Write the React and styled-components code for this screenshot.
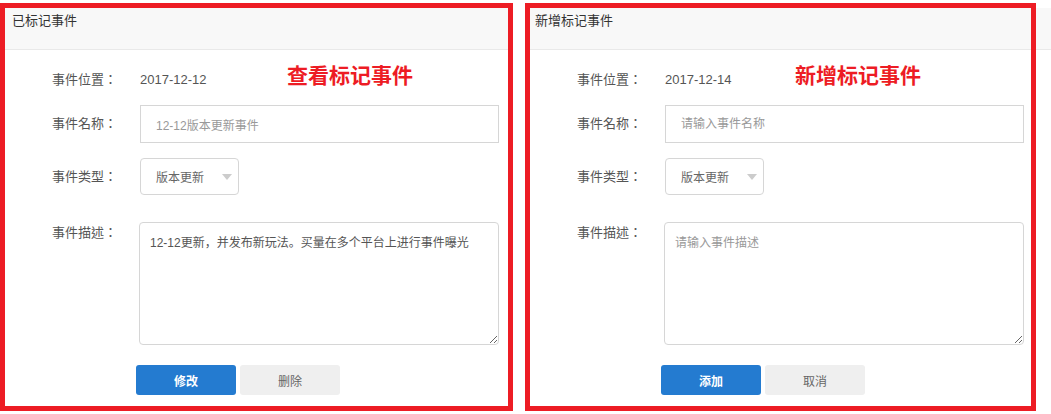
import React from "react";
import styled, { createGlobalStyle } from "styled-components";

const GlobalStyle = createGlobalStyle`
	html, body {
		margin: 0;
		padding: 0;
		background: #fff;
		font-family: "Liberation Sans", "Noto Sans CJK SC", sans-serif;
	}
	* {
		box-sizing: border-box;
	}
`;

const Page = styled.div`
	display: flex;
	gap: 12px;
	padding-top: 3px;
	width: 1051px;
	height: 414px;
`;

const Panel = styled.div`
	position: relative;
	width: ${(props) => props.width}px;
	height: 408px;
	border: 5px solid #ed1c24;
	background: #fff;
	display: flex;
	flex-direction: column;
`;

const Header = styled.div`
	height: 42px;
	background: #f8f8f8;
	border-bottom: 1px solid #e9e9e9;
	padding: 3px 0 0 ${(props) => props.indent}px;
	font-size: 13px;
	line-height: 20px;
	color: #333;
`;

// page header that continues past the right panel
const HeaderTail = styled.div`
	flex: 1;
	margin: 5px 0 0 -12px;
	height: 42px;
	background: #f8f8f8;
	border-bottom: 1px solid #e9e9e9;
`;

const Note = styled.div`
	position: absolute;
	top: 54px;
	left: ${(props) => props.left}px;
	font-family: "Noto Sans CJK SC", sans-serif;
	font-weight: 700;
	font-size: 21px;
	line-height: 24px;
	color: #ed1c24;
`;

const Body = styled.div`
	display: flex;
	flex-direction: column;
	padding: 20px 0 0 47px;
`;

const Row = styled.div`
	display: flex;
	align-items: ${(props) => (props.top ? "flex-start" : "center")};
	margin-top: ${(props) => props.gap || 0}px;
`;

const Label = styled.div`
	width: 88px;
	flex: none;
	font-family: "Liberation Sans", "Noto Sans CJK TC", sans-serif;
	font-size: 13px;
	line-height: 20px;
	color: #555;
	padding-top: ${(props) => (props.top ? 1 : 0)}px;
`;

const Value = styled.div`
	font-size: 13px;
	line-height: 20px;
	color: #555;
`;

const Input = styled.input`
	width: 359px;
	height: 38px;
	border: 1px solid #d6d6d6;
	padding: 0 15px;
	font-family: inherit;
	font-size: 12px;
	color: #999;
	outline: none;
	&::placeholder {
		color: #999;
	}
`;

const Select = styled.div`
	position: relative;
	width: 99px;
	height: 37px;
	border: 1px solid #d6d6d6;
	border-radius: 4px;
	padding-left: 15px;
	display: flex;
	align-items: center;
	font-size: 12px;
	color: #666;
	&::after {
		content: "";
		position: absolute;
		right: 6px;
		top: 15px;
		border-left: 5px solid transparent;
		border-right: 5px solid transparent;
		border-top: 6px solid #ccc;
	}
`;

const TextArea = styled.textarea`
	width: 360px;
	height: 123px;
	margin-left: -1px;
	border: 1px solid #d6d6d6;
	border-radius: 4px;
	padding: 11px 10px;
	font-family: inherit;
	font-size: 12px;
	line-height: 18px;
	color: #555;
	outline: none;
	&::placeholder {
		color: #999;
	}
`;

const Actions = styled.div`
	display: flex;
	gap: 4px;
	margin: 20px 0 0 84px;
`;

const Button = styled.button`
	width: 100px;
	height: 30px;
	border: none;
	border-radius: 3px;
	font-family: inherit;
	font-size: 12px;
	font-weight: ${(props) => (props.primary ? 700 : 400)};
	background: ${(props) => (props.primary ? "#247bd0" : "#efefef")};
	color: ${(props) => (props.primary ? "#fff" : "#666")};
	cursor: pointer;
`;

function EventPanel(props) {
	const { width, indent, title, note, noteLeft, date, name, desc, ok, cancel } = props;
	return (
		<Panel width={width}>
			<Header indent={indent}>{title}</Header>
			<Note left={noteLeft}>{note}</Note>
			<Body>
				<Row>
					<Label>事件位置：</Label>
					<Value>{date}</Value>
				</Row>
				<Row gap={15}>
					<Label>事件名称：</Label>
					<Input readOnly defaultValue={name} placeholder="请输入事件名称" />
				</Row>
				<Row gap={15}>
					<Label>事件类型：</Label>
					<Select>版本更新</Select>
				</Row>
				<Row gap={27} top>
					<Label top>事件描述：</Label>
					<TextArea readOnly defaultValue={desc} placeholder="请输入事件描述" />
				</Row>
				<Actions>
					<Button primary>{ok}</Button>
					<Button>{cancel}</Button>
				</Actions>
			</Body>
		</Panel>
	);
}

export default function App() {
	return (
		<>
			<GlobalStyle />
			<Page>
				<EventPanel
					width={513}
					indent={7}
					title="已标记事件"
					note="查看标记事件"
					noteLeft={282}
					date="2017-12-12"
					name="12-12版本更新事件"
					desc="12-12更新，并发布新玩法。买量在多个平台上进行事件曝光"
					ok="修改"
					cancel="删除"
				/>
				<EventPanel
					width={511}
					indent={5}
					title="新增标记事件"
					note="新增标记事件"
					noteLeft={265}
					date="2017-12-14"
					name=""
					desc=""
					ok="添加"
					cancel="取消"
				/>
				<HeaderTail />
			</Page>
		</>
	);
}
